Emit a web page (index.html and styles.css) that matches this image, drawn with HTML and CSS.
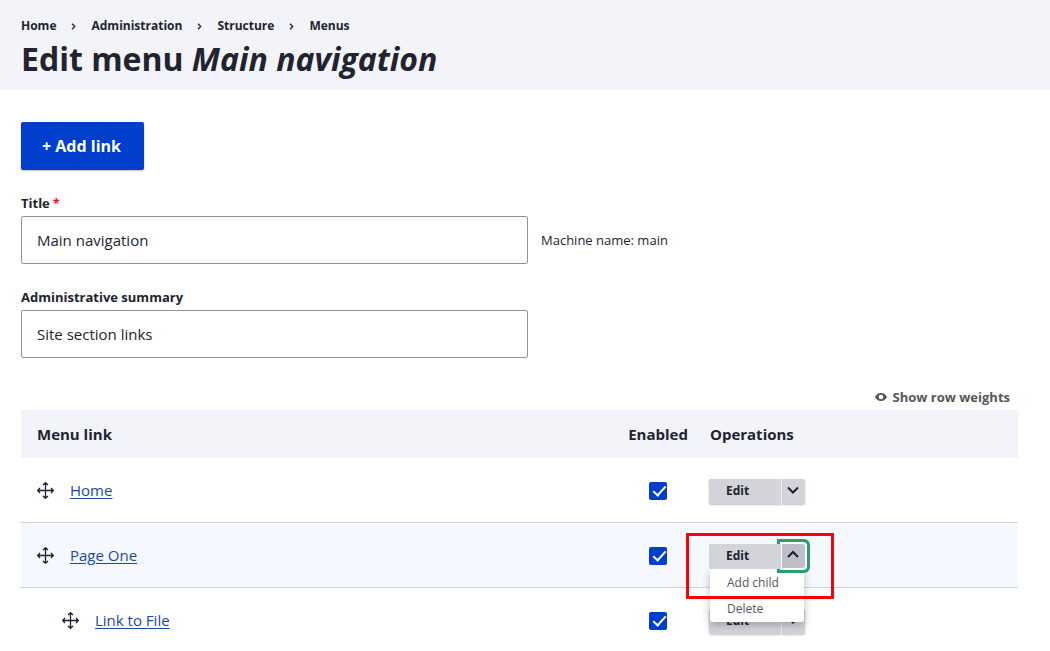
FILE: index.html
```html
<!DOCTYPE html>
<html lang="en">
<head>
<meta charset="utf-8">
<meta name="viewport" content="width=device-width, initial-scale=1">
<title>Edit menu Main navigation</title>
<link rel="stylesheet" href="styles.css">
</head>
<body>
<svg class="sprite" aria-hidden="true">
  <symbol id="move" viewBox="0 0 17 17"><path d="M8.500 1v15M1 8.500h15M6 3l2.500-2.300L11 3M6 14l2.500 2.300L11 14M3 6L.7 8.500L3 11M14 6l2.300 2.500L14 11"/></symbol>
  <symbol id="down" viewBox="0 0 14 9"><path d="M2 1.500l5 5 5-5"/></symbol>
  <symbol id="up" viewBox="0 0 14 9"><path d="M2 7l5-5 5 5"/></symbol>
  <symbol id="crumb" viewBox="0 0 5 7"><path d="M1 .8l2.700 2.700L1 6.200"/></symbol>
</svg>
<header class="page-header">
  <nav aria-label="Breadcrumb">
    <ol class="breadcrumb">
      <li><a href="#">Home</a></li>
      <li><svg class="crumb-icon" aria-hidden="true"><use href="#crumb"/></svg><a href="#">Administration</a></li>
      <li><svg class="crumb-icon" aria-hidden="true"><use href="#crumb"/></svg><a href="#">Structure</a></li>
      <li><svg class="crumb-icon" aria-hidden="true"><use href="#crumb"/></svg><a href="#">Menus</a></li>
    </ol>
  </nav>
  <h1 class="page-title">Edit menu <em>Main navigation</em></h1>
</header>
<main class="content">
  <a class="add-link" href="#">+ Add link</a>
  <form class="menu-form">
    <div class="field">
      <label class="field-label" for="title">Title<span class="required">*</span></label>
      <div class="field-row">
        <input class="text-input" id="title" type="text" value="Main navigation" required>
        <span class="machine-name">Machine name: main</span>
      </div>
    </div>
    <div class="field">
      <label class="field-label" for="summary">Administrative summary</label>
      <div class="field-row">
        <input class="text-input" id="summary" type="text" value="Site section links">
      </div>
    </div>
    <div class="weights-bar">
      <button class="weights-toggle" type="button">
        <svg class="eye-icon" viewBox="0 0 12 8" aria-hidden="true"><path fill-rule="evenodd" d="M6 0C3 0 1 1.700 0 4c1 2.300 3 4 6 4s5-1.700 6-4C11 1.700 9 0 6 0zM6 1.700a2.300 2.300 0 1 1 0 4.600a2.300 2.300 0 0 1 0-4.600z"/></svg>
        Show row weights
      </button>
    </div>
    <table class="menu-table">
      <thead>
        <tr><th class="col-link" scope="col">Menu link</th><th class="col-enabled" scope="col">Enabled</th><th scope="col">Operations</th></tr>
      </thead>
      <tbody>
        <tr>
          <td><div class="link-cell"><svg class="move-icon" aria-hidden="true"><use href="#move"/></svg><a href="#">Home</a></div></td>
          <td class="enabled-cell"><input class="tick" type="checkbox" aria-label="Enable Home" checked></td>
          <td><div class="dropbutton"><button class="edit" type="button">Edit</button><button class="toggle" type="button" aria-label="List additional actions"><svg class="chevron"><use href="#down"/></svg></button></div></td>
        </tr>
        <tr class="active-row">
          <td><div class="link-cell"><svg class="move-icon" aria-hidden="true"><use href="#move"/></svg><a href="#">Page One</a></div></td>
          <td class="enabled-cell"><input class="tick" type="checkbox" aria-label="Enable Page One" checked></td>
          <td>
            <div class="dropbutton open">
              <button class="edit" type="button">Edit</button><button class="toggle" type="button" aria-label="List additional actions" aria-expanded="true"><svg class="chevron"><use href="#up"/></svg></button>
              <ul class="actions">
                <li><a href="#">Add child</a></li>
                <li><a href="#">Delete</a></li>
              </ul>
              <span class="highlight"></span>
            </div>
          </td>
        </tr>
        <tr>
          <td><div class="link-cell nested"><svg class="move-icon" aria-hidden="true"><use href="#move"/></svg><a href="#">Link to File</a></div></td>
          <td class="enabled-cell"><input class="tick" type="checkbox" aria-label="Enable Link to File" checked></td>
          <td><div class="dropbutton"><button class="edit" type="button">Edit</button><button class="toggle" type="button" aria-label="List additional actions"><svg class="chevron"><use href="#down"/></svg></button></div></td>
        </tr>
      </tbody>
    </table>
  </form>
</main>
</body>
</html>
```
FILE: styles.css
```css
* { box-sizing: border-box; }
body {
  margin: 0;
  background: #fff;
  color: #222330;
  font: 15px/24px "Open Sans", "Noto Sans", sans-serif;
}
button, input { font: inherit; color: inherit; }
.sprite { position: absolute; width: 0; height: 0; }
symbol path { fill: none; }

.page-header { padding: 16px 32px 11px 21px; background: #f3f4f9; }
.breadcrumb {
  display: flex;
  margin: 0;
  padding: 0;
  list-style: none;
  font-size: 12px;
  font-weight: 700;
  line-height: 19px;
}
.breadcrumb li { display: flex; align-items: center; }
.breadcrumb a { color: inherit; text-decoration: none; }
.crumb-icon { width: 5px; height: 7px; margin: 2px 15px 0 15px; stroke: #222330; stroke-width: 1.3; }
.page-title { margin: 4px 0 0; font-size: 32px; font-weight: 700; line-height: 40px; }

.content { padding: 32px 32px 0 21px; }
.add-link {
  display: inline-block;
  padding: 12px 23px 12px 21px;
  border-radius: 2px;
  background: #003ecc;
  box-shadow: 0 1px 2px rgba(0, 0, 0, .25);
  color: #fff;
  font-size: 16px;
  font-weight: 700;
  text-decoration: none;
}
.menu-form { margin-top: 24px; }
.field { margin-bottom: 24px; }
.field-label { display: block; padding-bottom: 4px; font-size: 13px; font-weight: 700; line-height: 18px; }
.required { margin-left: 3px; color: #d72222; }
.field-row { display: flex; align-items: center; gap: 13px; }
.text-input {
  width: 507px;
  height: 48px;
  padding: 0 15px;
  border: 1px solid #919297;
  border-radius: 2px;
  background: #fff;
}
.machine-name { font-size: 13px; }

.weights-bar { display: flex; justify-content: flex-end; padding: 3px 8px 1px 0; }
.weights-toggle {
  display: flex;
  align-items: center;
  gap: 6px;
  padding: 0;
  border: 0;
  background: none;
  color: #55565b;
  font-size: 13px;
  font-weight: 700;
  line-height: 24px;
}
.eye-icon { width: 12px; height: 8px; fill: #55565b; }

.menu-table { width: 100%; table-layout: fixed; border-collapse: separate; border-spacing: 0; }
th { height: 48px; padding: 0 16px; background: #f3f4f9; text-align: left; }
.col-link { width: 59.4%; }
.col-enabled { width: 8.1%; padding: 0 0 0 9px; text-align: center; }
td { height: 65px; padding: 0 15px; border-bottom: 1px solid #d3d4d9; }
.active-row td { background: #f5f8ff; }
.link-cell { display: flex; align-items: center; gap: 16px; padding-left: 1px; }
.nested { padding-left: 26px; }
.link-cell a { color: #1a4a9e; text-underline-offset: 2px; }
.move-icon { width: 17px; height: 17px; stroke: #1a1c35; stroke-width: 1.3; }
.enabled-cell { padding: 2px 0 0 9px; }
.tick {
  display: block;
  width: 18px;
  height: 18px;
  margin: 0 auto;
  padding: 4px 0 0 4px;
  appearance: none;
  border-radius: 2px;
  background: #003ecc;
}
.tick::before {
  content: "";
  display: block;
  width: 11px;
  height: 5px;
  border: solid #fff;
  border-width: 0 0 2px 2px;
  transform: rotate(-48deg);
}

.dropbutton { position: relative; display: flex; gap: 1px; width: 96px; height: 25px; margin-top: 2px; }
.edit, .toggle { border: 0; background: #d3d4d9; box-shadow: 0 1px 2px rgba(0, 0, 0, .25); }
.edit {
  position: relative;
  flex: 1;
  padding: 0 0 0 17px;
  border-radius: 2px 0 0 2px;
  box-shadow: 0 1px 2px rgba(0, 0, 0, .25), 1px 0 #fff;
  font-size: 12px;
  font-weight: 700;
  line-height: 24px;
  text-align: left;
}
.toggle { display: grid; place-items: center; width: 23px; padding: 0 0 2px; border-radius: 0 2px 2px 0; }
.chevron { width: 14px; height: 9px; stroke: #1a1c35; stroke-width: 2; }
.open { z-index: 2; }
.open .edit { z-index: 4; box-shadow: 1px 0 #fff; }
.open .toggle {
  position: relative;
  z-index: 3;
  height: 24px;
  background: #bfc0c7;
  box-shadow: 0 0 0 2px #fff, 0 0 0 5px #2c9e69;
}
.actions {
  position: absolute;
  z-index: 2;
  top: 25px;
  left: 1px;
  right: 1px;
  margin: 0;
  padding: 1px 0 0;
  border-radius: 0 0 2px 2px;
  background: #fff;
  box-shadow: 0 3px 8px rgba(34, 35, 48, .3);
  clip-path: inset(0 -12px -16px);
  list-style: none;
  font-size: 12px;
  line-height: 26px;
}
.actions a { display: block; padding-left: 17px; color: #55565b; text-decoration: none; }
.highlight {
  position: absolute;
  z-index: 5;
  top: -11px;
  left: -23px;
  width: 148px;
  height: 66px;
  border: 3px solid #fb0007;
  pointer-events: none;
}
```
